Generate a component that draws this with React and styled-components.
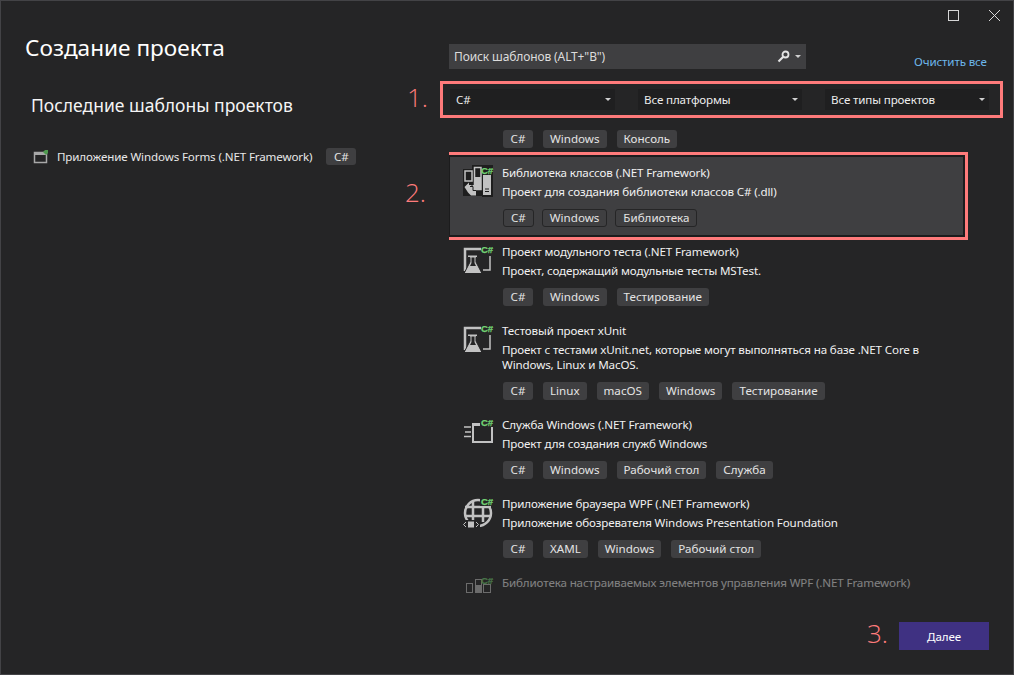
import styled, { createGlobalStyle } from "styled-components";

const RED = "#ff7b7b";
const GREY = "#c2c2c2";
const DARK = "#1e1e1e";
const FONT = `"Noto Sans", "Open Sans", sans-serif`;

const GlobalStyle = createGlobalStyle`
  html, body { margin: 0; padding: 0; background: #252526; }
  * { box-sizing: border-box; }
`;

const Window = styled.div`
  position: relative;
  width: 1014px;
  height: 675px;
  overflow: hidden;
  background: #252526;
  border: 1px solid #434346;
  color: #f1f1f1;
  font-family: ${FONT};
  font-size: 11.6px;
  letter-spacing: -0.13px;
`;

// Title bar with the window buttons
const TitleBar = styled.div`
  display: flex;
  justify-content: flex-end;
  align-items: center;
  gap: 28px;
  height: 29px;
  padding: 0 12px 0 0;
`;

const WindowButton = styled.svg`
  display: block;
  width: 13px;
  height: 13px;
  fill: none;
  stroke: #d6d6d6;
`;

const Main = styled.div`
  display: flex;
  height: 644px;
`;

// Left column
const Side = styled.div`
  width: 448px;
  padding: 4px 0 0 24px;
`;

const Heading = styled.h1`
  margin: 0;
  font-size: 22.6px;
  font-weight: 400;
  line-height: 27px;
  letter-spacing: 0;
  color: #fff;
`;

const SubHeading = styled.h2`
  margin: 32px 0 0 6px;
  font-size: 17.5px;
  font-weight: 400;
  line-height: 24px;
  letter-spacing: 0;
  color: #f4f4f4;
`;

const RecentRow = styled.div`
  display: flex;
  align-items: center;
  margin: 31px 0 0 8px;
  height: 17px;
`;

const RecentName = styled.span`
  margin: 0 14px 0 8px;
  color: #e8e8e8;
`;

// Right column
const Content = styled.div`
  flex: 1;
  padding-top: 14px;
`;

const SearchRow = styled.div`
  display: flex;
  height: 25px;
`;

const SearchBox = styled.div`
  display: flex;
  align-items: center;
  width: 357px;
  padding: 0 5px;
  background: #3f3f41;
  color: #dcdcdc;
  font-size: 12px;
  letter-spacing: -0.12px;
`;

const SearchText = styled.span`
  flex: 1;
`;

const ClearLink = styled.a`
  align-self: flex-end;
  margin-left: 108px;
  line-height: 15px;
  color: #6db7eb;
`;

const FilterRow = styled.div`
  position: relative;
  display: flex;
  gap: 23px;
  width: 540px;
  margin: 20px 0 0 1px;
  height: 21px;

  &::after {
    content: "";
    position: absolute;
    inset: -8px -13px -8px -10px;
    border: 3px solid ${RED};
    pointer-events: none;
  }
`;

const Dropdown = styled.div`
  display: flex;
  align-items: center;
  justify-content: space-between;
  flex: 0 0 ${(p) => p.$width}px;
  padding: 0 4px 0 6px;
  background: #1f1f20;
  color: #ececec;
`;

const Caret = styled.span`
  width: 0;
  height: 0;
  border-left: 3px solid transparent;
  border-right: 3px solid transparent;
  border-top: 3px solid #d0d0d0;
`;

const List = styled.div`
  height: 469px;
  margin-top: 18px;
  overflow: hidden;
`;

const Row = styled.div`
  position: relative;
  display: flex;
  width: 517px;
  padding: 7px 0 11px 11px;
  opacity: ${(p) => (p.$dimmed ? 0.45 : 1)};

  ${(p) =>
    p.$selected &&
    `
    margin: -4px 0 1px -1px;
    padding: 9px 0 8px 10px;
    background: #3f3f41;
    border: 2px solid #1c1c1d;

    &::after {
      content: "";
      position: absolute;
      inset: -5px;
      border: 3px solid ${RED};
      pointer-events: none;
    }
  `}
`;

const ClippedRow = styled.div`
  padding: 2px 0 11px 53px;
`;

const IconSlot = styled.div`
  flex: 0 0 42px;
  height: 15px;
`;

const ItemIcon = styled.svg`
  display: block;
  width: 34px;
  height: 34px;
  margin-top: -1px;
`;

const Body = styled.div`
  flex: 1;
`;

const Title = styled.div`
  margin-top: -1px;
  line-height: 15px;
  color: #f1f1f1;
`;

const Description = styled.div`
  margin-top: 4px;
  line-height: 15px;
  color: #f1f1f1;
`;

const Tags = styled.div`
  display: flex;
  gap: ${(p) => (p.$tight ? 8 : 10)}px;
  margin: ${(p) => (p.$flush ? 0 : "10px")} 0 0 1px;
`;

const Tag = styled.span`
  display: inline-flex;
  align-items: center;
  justify-content: center;
  min-width: 30px;
  height: ${(p) => (p.$small ? 17 : 18)}px;
  padding: 0 7px;
  border-radius: 3px;
  background: #3f3f41;
  border: ${(p) => (p.$outlined ? "1px solid #252526" : "none")};
  color: #e4e4e4;
  line-height: 1;
  letter-spacing: 0;
`;

const Footer = styled.div`
  display: flex;
  justify-content: flex-end;
  padding: 25px 24px 0 0;
`;

const NextButton = styled.button`
  width: 90px;
  height: 28px;
  border: 0;
  background: #3f3182;
  color: #fff;
  font: inherit;
  letter-spacing: inherit;
`;

// Red step numbers drawn over the screenshot
const StepNumber = styled.span`
  position: absolute;
  left: ${(p) => p.$x}px;
  top: ${(p) => p.$y}px;
  font-family: "Open Sans", sans-serif;
  font-size: 26px;
  font-weight: 300;
  line-height: 30px;
  letter-spacing: 0;
  color: ${RED};
`;

const MarkText = styled.text`
  font-family: "Liberation Sans", sans-serif;
  font-size: 9.5px;
  font-weight: 700;
  letter-spacing: 0;
  fill: #74d474;
  stroke: #74d474;
  stroke-width: 0.25px;
`;

function CSharpMark({ x = 21, y = 9 }) {
  return <MarkText x={x} y={y}>C#</MarkText>;
}

function LibraryIcon() {
  return (
    <ItemIcon viewBox="0 0 34 34">
      <path d="M3 4h9V0h21v32H22v-1H3z" fill={DARK} />
      <rect x="5" y="6" width="7" height="10" fill="none" stroke={GREY} strokeWidth="1.500" />
      <rect x="14.500" y="2.500" width="6.500" height="22" fill="none" stroke={GREY} strokeWidth="1.500" />
      <rect x="15" y="12" width="6" height="12" fill={GREY} />
      <rect x="23" y="10" width="8" height="20" fill={GREY} />
      <path d="M25 24h4M25 26.500h4" stroke={DARK} />
      <path d="M4.500 22l4.500-4.500v2.500h5v-4l6 5-4 3v6.500h-5l-3-3H8z" fill={GREY} />
      <path d="M10 21.500h3v4h3M12 19v3" stroke={DARK} fill="none" />
      <CSharpMark />
    </ItemIcon>
  );
}

function TestIcon() {
  return (
    <ItemIcon viewBox="0 0 34 34">
      <path d="M5 27V5h16" fill="none" stroke={GREY} strokeWidth="2.500" />
      <path d="M30 12v14h-7" fill="none" stroke={GREY} strokeWidth="1.500" />
      <path d="M7.500 11h10v2.500h-1.500V18l6 11.500H4L10 18v-4.500H7.500z" fill={GREY} stroke="#252526" />
      <path d="M11.500 13.500h3V19l1.500 3H10l1.500-3z" fill="#252526" />
      <CSharpMark />
    </ItemIcon>
  );
}

function ServiceIcon() {
  return (
    <ItemIcon viewBox="0 0 34 34">
      <rect x="13" y="7" width="19" height="18" fill="none" stroke={GREY} strokeWidth="2" />
      <rect x="12" y="6" width="21" height="3" fill={GREY} />
      <path d="M4 10h7M5 15h6M4 19.500h7" stroke={GREY} strokeWidth="1.500" />
      <rect x="20" y="1" width="13" height="9" fill="#252526" />
      <CSharpMark />
    </ItemIcon>
  );
}

function BrowserIcon() {
  return (
    <ItemIcon viewBox="0 0 34 34">
      <circle cx="18" cy="17" r="13" fill="none" stroke={GREY} strokeWidth="2.500" />
      <path d="M5 11h26M5 20h26M13 5v21M23 5v21" stroke={GREY} strokeWidth="2.500" />
      <rect x="3" y="24" width="17" height="10" fill="#252526" />
      <rect x="8" y="25.500" width="6" height="6" fill={GREY} />
      <path d="M6 26l-2.500 2.500L6 31M16 26l2.500 2.500L16 31" fill="none" stroke={GREY} />
      <rect x="20" y="1" width="13" height="9" fill="#252526" />
      <CSharpMark />
    </ItemIcon>
  );
}

function ControlIcon() {
  return (
    <ItemIcon viewBox="0 0 34 34">
      <rect x="6.500" y="8.500" width="6" height="9" fill="none" stroke={GREY} />
      <rect x="15.500" y="4.500" width="6" height="13" fill="none" stroke={GREY} />
      <rect x="16" y="10" width="5" height="7" fill={GREY} />
      <rect x="23.500" y="9.500" width="7" height="8" fill="none" stroke={GREY} />
      <CSharpMark />
    </ItemIcon>
  );
}

const RecentSvg = styled.svg`
  display: block;
  width: 16px;
  height: 16px;
`;

function FormsIcon() {
  return (
    <RecentSvg viewBox="0 0 16 16">
      <rect x="1.500" y="3.500" width="12" height="10" fill="none" stroke="#a8a8a8" strokeWidth="1.500" />
      <rect x="1" y="3" width="13" height="3" fill="#a8a8a8" />
      <path d="M10 3l2-2h3v3l-2 2z" fill="#4f9a4f" />
    </RecentSvg>
  );
}

const SearchGlyph = styled.svg`
  display: block;
  width: 13px;
  height: 13px;
  margin-right: 5px;
`;

const ITEMS = [
  {
    id: "library",
    icon: <LibraryIcon />,
    title: "Библиотека классов (.NET Framework)",
    description: ["Проект для создания библиотеки классов C# (.dll)"],
    tags: ["C#", "Windows", "Библиотека"],
    selected: true,
  },
  {
    id: "unit",
    icon: <TestIcon />,
    title: "Проект модульного теста (.NET Framework)",
    description: ["Проект, содержащий модульные тесты MSTest."],
    tags: ["C#", "Windows", "Тестирование"],
  },
  {
    id: "xunit",
    icon: <TestIcon />,
    title: "Тестовый проект xUnit",
    description: [
      "Проект с тестами xUnit.net, которые могут выполняться на базе .NET Core в",
      "Windows, Linux и MacOS.",
    ],
    tags: ["C#", "Linux", "macOS", "Windows", "Тестирование"],
  },
  {
    id: "service",
    icon: <ServiceIcon />,
    title: "Служба Windows (.NET Framework)",
    description: ["Проект для создания служб Windows"],
    tags: ["C#", "Windows", "Рабочий стол", "Служба"],
  },
  {
    id: "browser",
    icon: <BrowserIcon />,
    title: "Приложение браузера WPF (.NET Framework)",
    description: ["Приложение обозревателя Windows Presentation Foundation"],
    tags: ["C#", "XAML", "Windows", "Рабочий стол"],
  },
  {
    id: "control",
    icon: <ControlIcon />,
    title: "Библиотека настраиваемых элементов управления WPF (.NET Framework)",
    dimmed: true,
  },
];

function TemplateRow({ item }) {
  return (
    <Row $selected={item.selected} $dimmed={item.dimmed}>
      <IconSlot>{item.icon}</IconSlot>
      <Body>
        <Title>{item.title}</Title>
        {item.description && (
          <Description>
            {item.description.map((line) => (
              <div key={line}>{line}</div>
            ))}
          </Description>
        )}
        {item.tags && (
          <Tags $tight={item.selected}>
            {item.tags.map((tag) => (
              <Tag key={tag} $outlined={item.selected}>{tag}</Tag>
            ))}
          </Tags>
        )}
      </Body>
    </Row>
  );
}

export default function App() {
  return (
    <>
      <GlobalStyle />
      <Window>
        <TitleBar>
          <WindowButton viewBox="0 0 13 13">
            <rect x="1.500" y="1.500" width="10" height="10" />
          </WindowButton>
          <WindowButton viewBox="0 0 13 13">
            <path d="M1 1l11 11M12 1L1 12" />
          </WindowButton>
        </TitleBar>
        <Main>
          <Side>
            <Heading>Создание проекта</Heading>
            <SubHeading>Последние шаблоны проектов</SubHeading>
            <RecentRow>
              <FormsIcon />
              <RecentName>Приложение Windows Forms (.NET Framework)</RecentName>
              <Tag $small>C#</Tag>
            </RecentRow>
          </Side>
          <Content>
            <SearchRow>
              <SearchBox>
                <SearchText>Поиск шаблонов (ALT+"В")</SearchText>
                <SearchGlyph viewBox="0 0 13 13">
                  <circle cx="8.500" cy="4.500" r="3" fill="none" stroke="#e4e4e4" strokeWidth="1.800" />
                  <path d="M6 7l-4.500 4.500" stroke="#e4e4e4" strokeWidth="2.200" />
                </SearchGlyph>
                <Caret />
              </SearchBox>
              <ClearLink>Очистить все</ClearLink>
            </SearchRow>
            <FilterRow>
              <Dropdown $width={165}>C#<Caret /></Dropdown>
              <Dropdown $width={164}>Все платформы<Caret /></Dropdown>
              <Dropdown $width={164}>Все типы проектов<Caret /></Dropdown>
            </FilterRow>
            <List>
              <ClippedRow>
                <Tags $flush>
                  <Tag>C#</Tag>
                  <Tag>Windows</Tag>
                  <Tag>Консоль</Tag>
                </Tags>
              </ClippedRow>
              {ITEMS.map((item) => (
                <TemplateRow key={item.id} item={item} />
              ))}
            </List>
            <Footer>
              <NextButton>Далее</NextButton>
            </Footer>
          </Content>
        </Main>
        <StepNumber $x={406} $y={81}>1.</StepNumber>
        <StepNumber $x={404} $y={176}>2.</StepNumber>
        <StepNumber $x={866} $y={617}>3.</StepNumber>
      </Window>
    </>
  );
}
